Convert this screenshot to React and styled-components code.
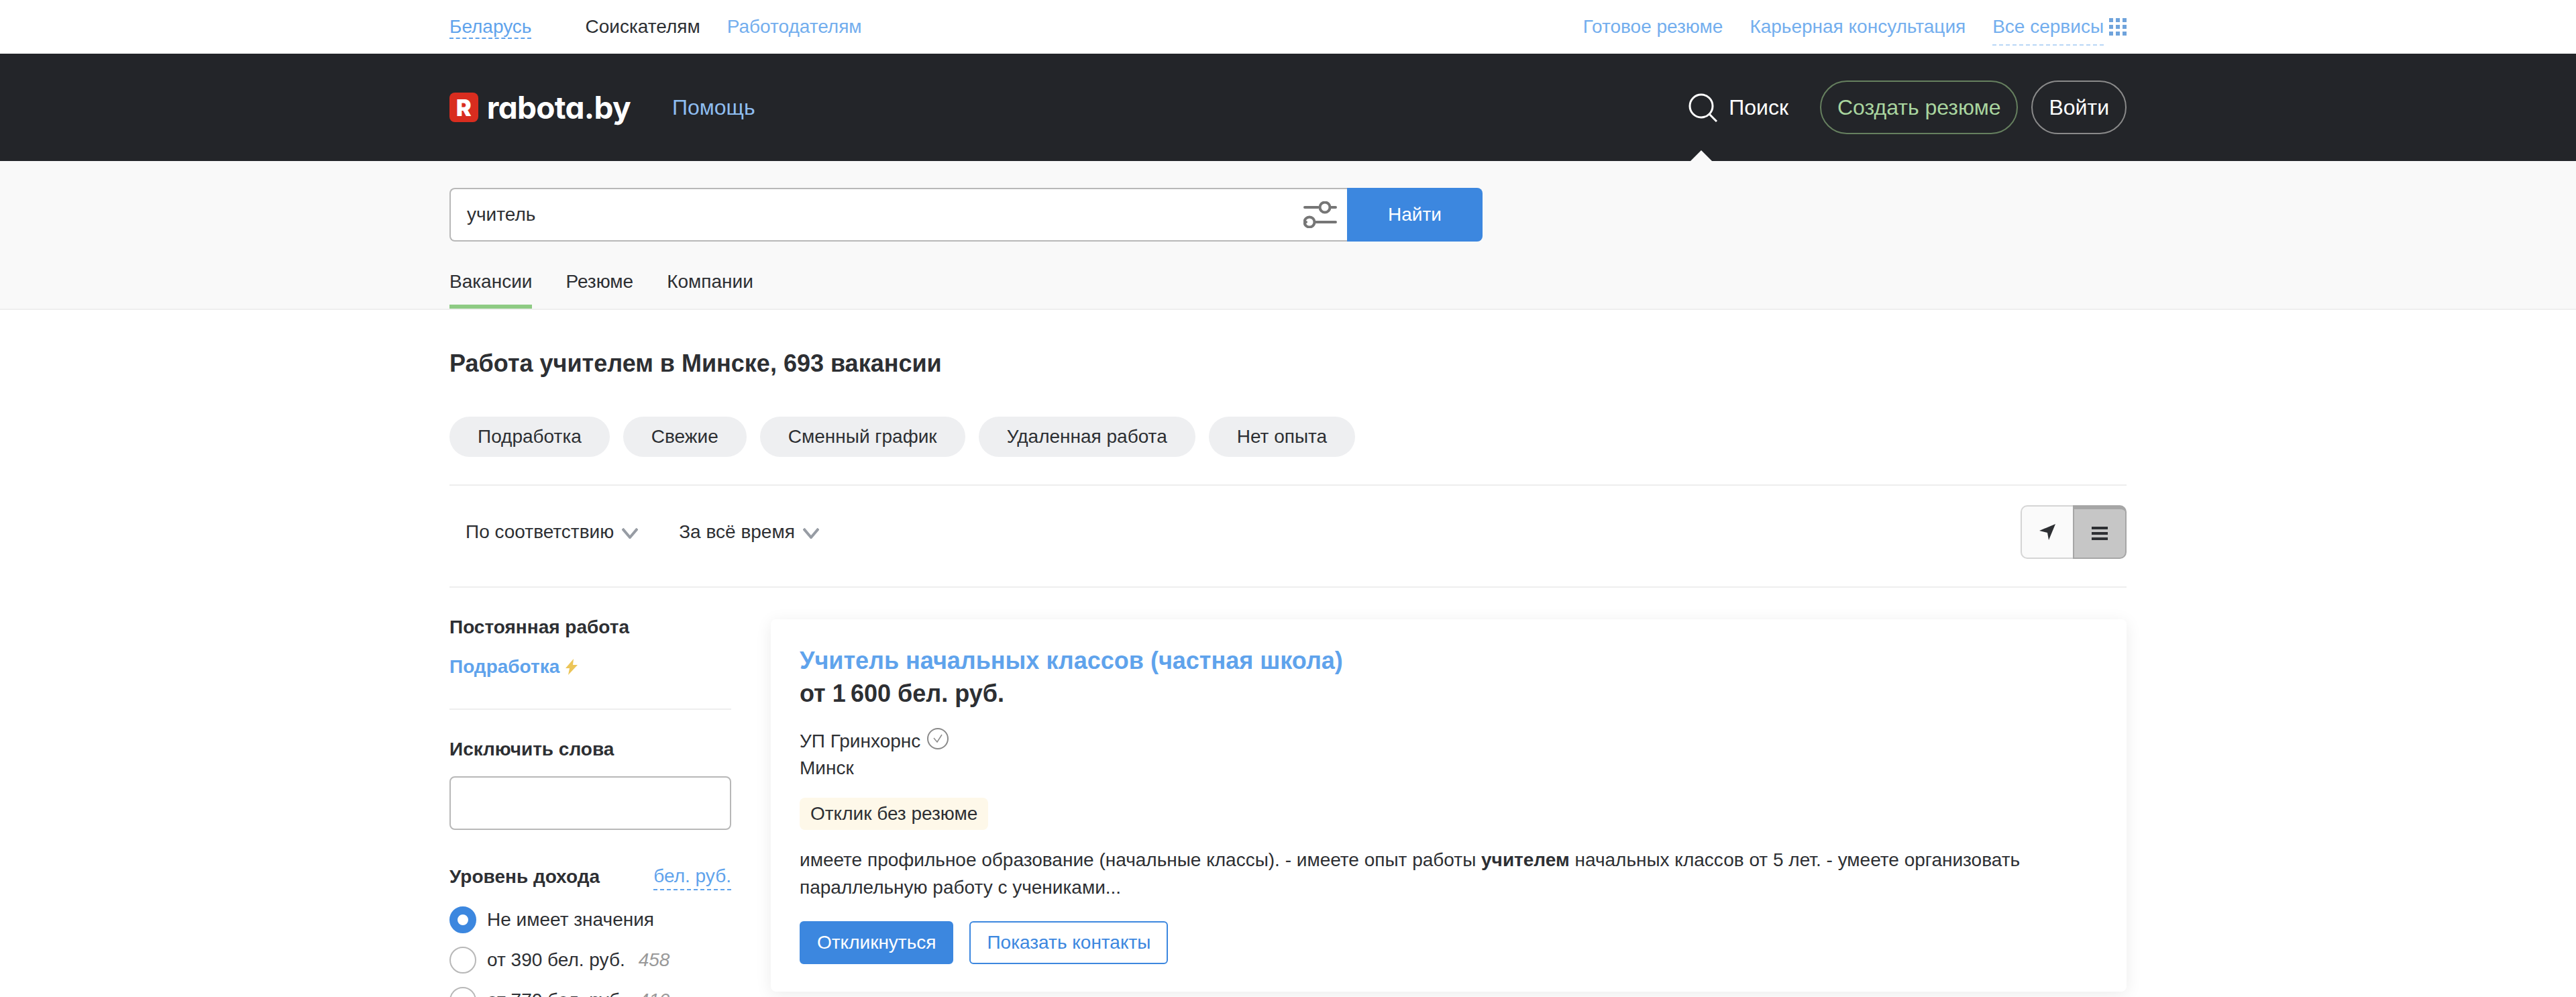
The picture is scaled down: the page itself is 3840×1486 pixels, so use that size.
import styled, { createGlobalStyle } from 'styled-components';

const GlobalStyle = createGlobalStyle`
  html, body {
    margin: 0;
    padding: 0;
    background: #fff;
    overflow: hidden;
  }
  body {
    font-family: "Liberation Sans", Arial, sans-serif;
    font-size: 28px;
    line-height: 40px;
    color: #2d2f33;
  }
`;

const Page = styled.div`
  height: 1486px;
  overflow: hidden;
`;

const Container = styled.div`
  width: 2500px;
  margin: 0 auto;
`;

const TopBar = styled(Container)`
  height: 80px;
  padding-top: 24px;
  box-sizing: border-box;
  display: flex;
  align-items: flex-start;
`;

const TopLink = styled.a`
  line-height: 32px;
  margin-right: ${p => p.$gap || 40}px;
  color: ${p => p.$dark ? '#2d2f33' : '#73aeee'};
`;

const RegionLink = styled.a`
  line-height: 32px;
  margin-right: 80px;
  color: #5fa3ec;
  border-bottom: 2px dashed #5fa3ec;
`;

const TopRight = styled.div`
  margin-left: auto;
  display: flex;
  align-items: flex-start;
`;

const ServicesLink = styled.a`
  line-height: 32px;
  color: #73aeee;
  padding-bottom: 10px;
  border-bottom: 2px dashed #b9d7f6;
`;

const ServicesIcon = styled.svg`
  width: 26px;
  height: 26px;
  margin: 3px 0 0 8px;
  fill: #6fa3dc;
`;

const HeaderBand = styled.header`
  background: #232529;
  height: 160px;
`;

const HeaderRow = styled(Container)`
  height: 100%;
  display: flex;
  align-items: center;
`;

const Logo = styled.div`
  display: flex;
  align-items: center;
  gap: 13px;
  width: 270px;
  margin-right: 62px;
`;

const LogoMark = styled.span`
  width: 43px;
  height: 44px;
  border-radius: 8px;
  background: #d92d1f;
  color: #fff;
  font-family: Inter, sans-serif;
  font-weight: 900;
  font-size: 34px;
  line-height: 46px;
  text-align: center;
`;

const LogoText = styled.span`
  font-family: Inter, sans-serif;
  font-weight: 700;
  font-size: 46px;
  line-height: 44px;
  letter-spacing: -0.7px;
  font-feature-settings: "cv11" 1;
  color: #fff;
`;

const HelpLink = styled.a`
  font-size: 32px;
  color: #8ebdf0;
`;

const HeaderRight = styled.div`
  margin-left: auto;
  display: flex;
  align-items: center;
`;

const SearchToggle = styled.a`
  position: relative;
  display: flex;
  align-items: center;
  gap: 17px;
  margin-right: 47px;
  color: #fff;
  font-size: 32px;
`;

const Notch = styled.span`
  position: absolute;
  left: 3px;
  top: 85px;
  width: 0;
  height: 0;
  border-left: 16px solid transparent;
  border-right: 16px solid transparent;
  border-bottom: 16px solid #f9f9f9;
`;

const PillButton = styled.a`
  height: 80px;
  box-sizing: border-box;
  padding: 0 ${p => p.$pad}px;
  margin-left: ${p => p.$left || 0}px;
  display: flex;
  align-items: center;
  font-size: 32px;
  border-radius: 40px;
  border: 2px solid ${p => p.$border};
  color: ${p => p.$color};
`;

const SearchBand = styled.section`
  background: #f9f9f9;
  height: 222px;
  border-bottom: 2px solid #eeeeee;
  box-sizing: border-box;
  padding-top: 40px;
`;

const SearchRow = styled.div`
  display: flex;
  width: 1540px;
  height: 80px;
`;

const SearchField = styled.div`
  flex: 1;
  display: flex;
  align-items: center;
  justify-content: space-between;
  padding: 0 15px 0 24px;
  background: #fff;
  border: 2px solid #b8b8b8;
  border-right: 0;
  border-radius: 8px 0 0 8px;
`;

const SearchButton = styled.button`
  width: 202px;
  border: 0;
  border-radius: 0 8px 8px 0;
  background: #3c87df;
  color: #fff;
  font: inherit;
`;

const Tabs = styled.nav`
  display: flex;
  gap: 50px;
  height: 100px;
  box-sizing: border-box;
`;

const Tab = styled.a`
  padding-top: 40px;
  box-sizing: border-box;
  height: 100px;
  border-bottom: 6px solid ${p => p.$active ? '#8ecb84' : 'transparent'};
`;

const Heading = styled.h1`
  margin: 56px 0 55px;
  font-size: 36px;
  line-height: 48px;
  font-weight: 700;
`;

const Chips = styled.div`
  display: flex;
  gap: 20px;
  padding-bottom: 41px;
  border-bottom: 2px solid #eeeeee;
`;

const Chip = styled.a`
  height: 60px;
  padding: 0 42px;
  display: flex;
  align-items: center;
  border-radius: 30px;
  background: #eeeff1;
`;

const SortRow = styled.div`
  display: flex;
  align-items: center;
  padding: 29px 0 41px;
  border-bottom: 2px solid #eeeeee;
`;

const SortItem = styled.a`
  display: flex;
  align-items: center;
  gap: 12px;
  margin-left: 24px;
  margin-right: 37px;
`;

const Chevron = styled.svg`
  width: 24px;
  height: 16px;
  margin-top: 4px;
  fill: none;
  stroke: #979ca4;
  stroke-width: 4;
`;

const ViewToggle = styled.div`
  margin-left: auto;
  display: flex;
  height: 80px;
`;

const ViewButton = styled.span`
  display: flex;
  align-items: center;
  justify-content: center;
  box-sizing: border-box;
  width: ${p => p.$active ? 80 : 78}px;
  background: ${p => p.$active ? '#c6c6c6' : '#fafafa'};
  border: 2px solid ${p => p.$active ? '#a6a6a6' : '#d5d5d5'};
  border-width: ${p => p.$active ? '6px 2px 2px 2px' : '2px 0 2px 2px'};
  border-radius: ${p => p.$active ? '0 10px 10px 0' : '10px 0 0 10px'};
`;

const MainGrid = styled.main`
  display: grid;
  grid-template-columns: 420px 2021px;
  column-gap: 59px;
  padding-top: 39px;
  align-items: start;
`;

const GroupTitle = styled.div`
  font-weight: 700;
  margin-top: ${p => p.$top || 0}px;
`;

const BoldLink = styled.a`
  display: flex;
  align-items: center;
  gap: 9px;
  margin-top: 19px;
  font-weight: 700;
  color: #5fa3ec;
`;

const Divider = styled.div`
  height: 2px;
  margin-top: 42px;
  background: #eeeeee;
`;

const ExcludeInput = styled.div`
  height: 80px;
  box-sizing: border-box;
  margin-top: 20px;
  border: 2px solid #b8b8b8;
  border-radius: 8px;
`;

const IncomeHead = styled.div`
  display: flex;
  justify-content: space-between;
  margin-top: 50px;
`;

const CurrencyLink = styled.a`
  height: 38px;
  line-height: 38px;
  color: #5fa3ec;
  border-bottom: 2px dashed #5fa3ec;
`;

const RadioList = styled.div`
  display: flex;
  flex-direction: column;
  gap: 20px;
  margin-top: 24px;
`;

const RadioRow = styled.label`
  display: flex;
  align-items: center;
  gap: 16px;
`;

const RadioDot = styled.span`
  width: 40px;
  height: 40px;
  box-sizing: border-box;
  border-radius: 50%;
  background: #fff;
  border: ${p => p.$on ? '12px solid #3c87df' : '2px solid #b8b8b8'};
`;

const Count = styled.i`
  margin-left: 20px;
  color: #999;
`;

const Card = styled.article`
  margin-top: 8px;
  padding: 38px 43px 41px;
  border-radius: 8px;
  background: #fff;
  box-shadow: 0 4px 24px rgba(0, 0, 0, 0.08);
`;

const VacancyTitle = styled.a`
  display: block;
  font-size: 36px;
  line-height: 48px;
  font-weight: 700;
  color: #5fa3ec;
`;

const Salary = styled.div`
  font-size: 36px;
  line-height: 49px;
  font-weight: 700;
`;

const Company = styled.div`
  display: flex;
  align-items: center;
  gap: 10px;
  margin-top: 27px;
`;

const VerifiedWrap = styled.svg`
  width: 32px;
  height: 32px;
  margin-top: -8px;
  fill: none;
  stroke: #8a8a8a;
  stroke-width: 2;
`;

const Tag = styled.span`
  display: inline-block;
  height: 48px;
  line-height: 48px;
  margin-top: 24px;
  padding: 0 16px;
  border-radius: 8px;
  background: #fef8e9;
`;

const Snippet = styled.p`
  margin: 24px 0 0;
  line-height: 41px;
  b { font-weight: 700; }
`;

const Actions = styled.div`
  display: flex;
  gap: 24px;
  margin-top: 30px;
`;

const ActionButton = styled.a`
  height: 64px;
  box-sizing: border-box;
  padding: 0 24px;
  display: flex;
  align-items: center;
  border-radius: 6px;
  border: 2px solid #3c87df;
  background: ${p => p.$primary ? '#3c87df' : '#fff'};
  color: ${p => p.$primary ? '#fff' : '#3c87df'};
`;

const GridIcon = () => (
  <ServicesIcon viewBox="0 0 26 26">
    {[0, 10, 20].map(y => [0, 10, 20].map(x => <rect key={`${x}-${y}`} x={x} y={y} width="6" height="6" />))}
  </ServicesIcon>
);

const SearchIcon = () => (
  <svg width="43" height="43" viewBox="0 0 43 43" fill="none" stroke="#fff" strokeWidth="3">
    <circle cx="19" cy="19" r="17" />
    <path d="M31 31l11 11" />
  </svg>
);

const SlidersIcon = () => (
  <svg width="50" height="40" viewBox="0 0 50 40" fill="none" stroke="#767676" strokeWidth="4" strokeLinecap="round">
    <path d="M2 9h20M40 9h8M18 31h30M2 31h2" />
    <circle cx="32" cy="9" r="7.5" />
    <circle cx="9" cy="31" r="7.5" />
  </svg>
);

const ChevronIcon = () => (
  <Chevron viewBox="0 0 24 16"><path d="M1 1l11 13L23 1" /></Chevron>
);

const BoltIcon = () => (
  <svg width="18" height="24" viewBox="0 0 18 24" fill="#ecc558">
    <path d="M12 0L0 14h6L4 24 18 9h-7z" />
  </svg>
);

const VerifiedIcon = () => (
  <VerifiedWrap viewBox="0 0 32 32">
    <circle cx="16" cy="16" r="15" />
    <path d="M10 15l5 6 7-11" strokeWidth="1.5" />
  </VerifiedWrap>
);

const ArrowIcon = () => (
  <svg width="24" height="24" viewBox="0 0 24 24" fill="#2d2f33"><path d="M24 0L0 10l12 3 2 11z" /></svg>
);

const MenuIcon = () => (
  <svg width="24" height="20" viewBox="0 0 24 20" fill="#2d2f33">
    <rect width="24" height="4" /><rect y="8" width="24" height="4" /><rect y="16" width="24" height="4" />
  </svg>
);

const chips = ['Подработка', 'Свежие', 'Сменный график', 'Удаленная работа', 'Нет опыта'];
const incomes = [
  { label: 'Не имеет значения', on: true },
  { label: 'от 390 бел. руб.', count: 458 },
  { label: 'от 770 бел. руб.', count: 410 },
];

export default function App() {
  return (
    <Page>
      <GlobalStyle />
      <TopBar>
        <RegionLink>Беларусь</RegionLink>
        <TopLink $dark>Соискателям</TopLink>
        <TopLink>Работодателям</TopLink>
        <TopRight>
          <TopLink>Готовое резюме</TopLink>
          <TopLink>Карьерная консультация</TopLink>
          <ServicesLink>Все сервисы</ServicesLink>
          <GridIcon />
        </TopRight>
      </TopBar>
      <HeaderBand>
        <HeaderRow>
          <Logo>
            <LogoMark>R</LogoMark>
            <LogoText>rabota.by</LogoText>
          </Logo>
          <HelpLink>Помощь</HelpLink>
          <HeaderRight>
            <SearchToggle>
              <SearchIcon />
              Поиск
              <Notch />
            </SearchToggle>
            <PillButton $pad={24} $border="#66805f" $color="#a9d59f">Создать резюме</PillButton>
            <PillButton $pad={24} $left={20} $border="#8a8a8a" $color="#fff">Войти</PillButton>
          </HeaderRight>
        </HeaderRow>
      </HeaderBand>
      <SearchBand>
        <Container>
          <SearchRow>
            <SearchField>
              учитель
              <SlidersIcon />
            </SearchField>
            <SearchButton>Найти</SearchButton>
          </SearchRow>
          <Tabs>
            <Tab $active>Вакансии</Tab>
            <Tab>Резюме</Tab>
            <Tab>Компании</Tab>
          </Tabs>
        </Container>
      </SearchBand>
      <Container>
        <Heading>Работа учителем в Минске, 693 вакансии</Heading>
        <Chips>
          {chips.map(c => <Chip key={c}>{c}</Chip>)}
        </Chips>
        <SortRow>
          <SortItem>По соответствию <ChevronIcon /></SortItem>
          <SortItem>За всё время <ChevronIcon /></SortItem>
          <ViewToggle>
            <ViewButton><ArrowIcon /></ViewButton>
            <ViewButton $active><MenuIcon /></ViewButton>
          </ViewToggle>
        </SortRow>
        <MainGrid>
          <aside>
            <GroupTitle>Постоянная работа</GroupTitle>
            <BoldLink>Подработка <BoltIcon /></BoldLink>
            <Divider />
            <GroupTitle $top={39}>Исключить слова</GroupTitle>
            <ExcludeInput />
            <IncomeHead>
              <GroupTitle>Уровень дохода</GroupTitle>
              <CurrencyLink>бел. руб.</CurrencyLink>
            </IncomeHead>
            <RadioList>
              {incomes.map(r => (
                <RadioRow key={r.label}>
                  <RadioDot $on={r.on} />
                  <span>{r.label}{r.count && <Count>{r.count}</Count>}</span>
                </RadioRow>
              ))}
            </RadioList>
          </aside>
          <Card>
            <VacancyTitle>Учитель начальных классов (частная школа)</VacancyTitle>
            <Salary>от 1{'\u2009'}600 бел. руб.</Salary>
            <Company>УП Гринхорнс <VerifiedIcon /></Company>
            <div>Минск</div>
            <Tag>Отклик без резюме</Tag>
            <Snippet>
              имеете профильное образование (начальные классы). - имеете опыт работы <b>учителем</b> начальных классов от 5 лет. - умеете организовать параллельную работу с учениками...
            </Snippet>
            <Actions>
              <ActionButton $primary>Откликнуться</ActionButton>
              <ActionButton>Показать контакты</ActionButton>
            </Actions>
          </Card>
        </MainGrid>
      </Container>
    </Page>
  );
}
